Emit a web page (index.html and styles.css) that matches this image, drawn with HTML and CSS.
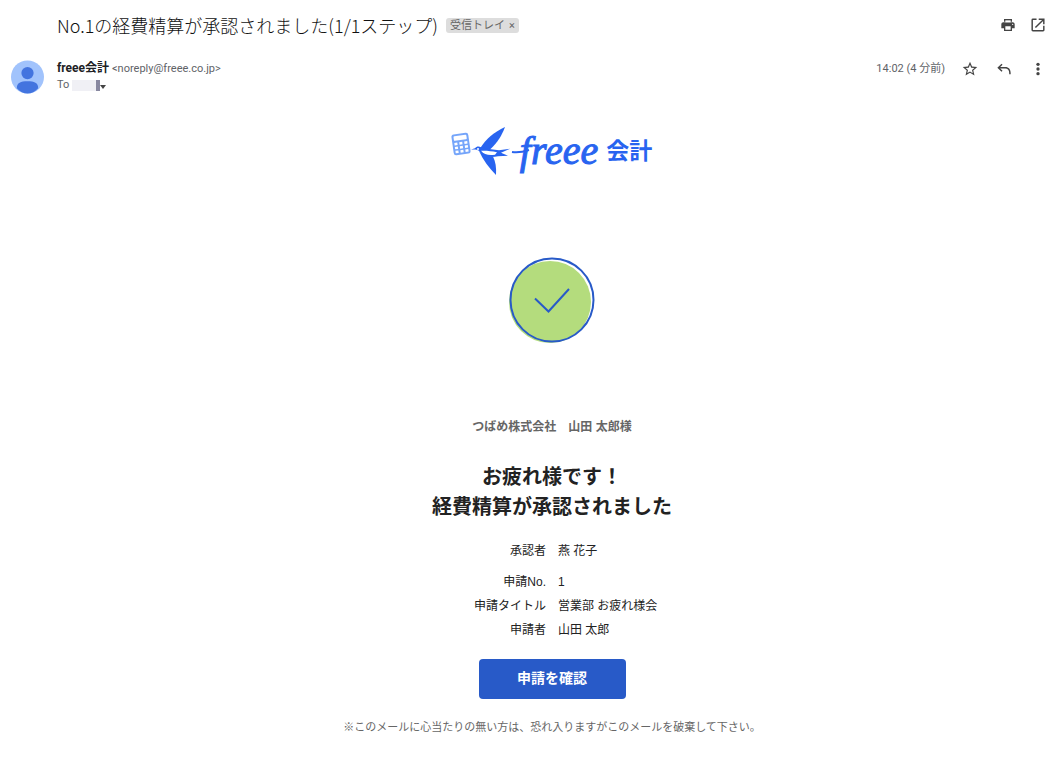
FILE: index.html
```html
<!DOCTYPE html>
<html lang="ja">
<head>
    <meta charset="UTF-8">
    <meta name="viewport" content="width=device-width, initial-scale=1.0">
    <title>No.1の経費精算が承認されました</title>
    <link rel="stylesheet" href="styles.css">
</head>
<body>
    <header class="subject-bar">
        <h1>No.1の経費精算が承認されました(1/1ステップ)</h1>
        <span class="label">受信トレイ<button class="label-remove" aria-label="ラベルを削除">×</button></span>
        <div class="actions">
            <button class="icon" aria-label="印刷">
                <svg viewBox="0 0 24 24"><path d="M19 8H5c-1.66 0-3 1.34-3 3v6h4v4h12v-4h4v-6c0-1.66-1.34-3-3-3zm-3 11H8v-5h8v5zm3-7c-.55 0-1-.45-1-1s.45-1 1-1 1 .45 1 1-.45 1-1 1zM18 3H6v4h12V3z"/><path class="paper" d="M8 5h8v3H8z"/></svg>
            </button>
            <button class="icon" aria-label="新しいウィンドウで開く">
                <svg viewBox="1 1 22 22"><path d="M19 19H5V5h5V3H5a2 2 0 0 0-2 2v14a2 2 0 0 0 2 2h14c1.1 0 2-.9 2-2v-6h-2v6zM13 3v2h4.590l-9.830 9.830 1.410 1.410L19 6.410V11h2V3h-8z"/></svg>
            </button>
        </div>
    </header>

    <section class="sender">
        <svg class="avatar" viewBox="0 0 34 34">
            <circle cx="17" cy="17" r="17" fill="#a1c3fc"/>
            <circle cx="17" cy="13" r="6.300" fill="#4374df"/>
            <path d="M6 28.500C6 23 10 21.500 17 21.500s11 1.500 11 7C25 32 21 34 17 34s-8-2-11-5.500z" fill="#4374df"/>
        </svg>
        <div class="from">
            <div><b>freee会計</b> <span class="address">&lt;noreply@freee.co.jp&gt;</span></div>
            <div class="to">To <span class="masked"></span><button class="details" aria-label="詳細を表示"></button></div>
        </div>
        <span class="time">14:02 (4 分前)</span>
        <div class="actions">
            <button class="icon" aria-label="スター">
                <svg viewBox="1 1 22 22"><path d="M22 9.240l-7.190-.62L12 2 9.190 8.630 2 9.240l5.460 4.730L5.820 21 12 17.270 18.180 21l-1.630-7.030L22 9.240zM12 15.400l-3.760 2.270 1-4.280-3.320-2.880 4.380-.38L12 6.100l1.710 4.040 4.380.38-3.320 2.880 1 4.280L12 15.400z"/></svg>
            </button>
            <button class="icon" aria-label="返信">
                <svg viewBox="0 0 24 24"><path d="M8.300 4l1.500 1.500L6.300 9H14c5 0 8 3.500 8 9v2h-2.200v-2c0-4.300-2.200-6.800-5.800-6.800H6.300l3.500 3.500-1.500 1.500L2 10.100z"/></svg>
            </button>
            <button class="icon" aria-label="その他">
                <svg viewBox="0 0 24 24"><circle cx="12" cy="5" r="2.500"/><circle cx="12" cy="12" r="2.500"/><circle cx="12" cy="19" r="2.500"/></svg>
            </button>
        </div>
    </section>

    <main class="mail">
        <div class="logo">
            <svg class="swallow" viewBox="2 1 68 54">
                <!-- calculator -->
                <g transform="rotate(-8 11 21)">
                    <rect x="2.500" y="10.500" width="17" height="21" rx="2.500" fill="#75a5fa"/>
                    <g fill="#fff">
                        <rect x="4.500" y="12.500" width="13" height="4.500" rx="1"/>
                        <rect x="4.500" y="19" width="3" height="2.500"/><rect x="9.500" y="19" width="3" height="2.500"/><rect x="14.500" y="19" width="3" height="2.500"/>
                        <rect x="4.500" y="23" width="3" height="2.500"/><rect x="9.500" y="23" width="3" height="2.500"/><rect x="14.500" y="23" width="3" height="2.500"/>
                        <rect x="4.500" y="27" width="3" height="2.500"/><rect x="9.500" y="27" width="3" height="2.500"/><rect x="14.500" y="27" width="3" height="2.500"/>
                    </g>
                </g>
                <!-- swallow -->
                <g fill="#2864f0">
                    <path d="M30 25.500C36 16 44 9 55 4c-3 8-7 15-15 22.500z"/>
                    <path d="M29 28c4 4 9 5 14 5.500 2.500 5 3.500 11 3 18.500C39 45 33 37 29 28z"/>
                    <path d="M21 26.500l4-1.200c1.500-2.200 4-2.300 6-1l10 2 8 1 11-1.500-9 4 7 3-10 .5c-8 1.500-15 .5-19-5.500-2-1.300-4-1.600-8-1.300z"/>
                </g>
                <path d="M31 27.800c5-.3 10 .2 16 1.400l-2 2.600c-6 .8-11 .2-14-4z" fill="#fff"/>
                <circle cx="28" cy="26" r="1" fill="#fff"/>
                <path d="M62 29c6 1 11 0 17-2" fill="none" stroke="#2864f0" stroke-width="2"/>
            </svg>
            <span class="wordmark">freee</span>
            <span class="product">会計</span>
        </div>

        <svg class="approved" viewBox="0 0 88 88">
            <circle cx="42" cy="45" r="41" fill="#b4dc7d"/>
            <circle cx="44" cy="43" r="41.500" fill="none" stroke="#285ac8" stroke-width="2"/>
            <path d="M27 41.500l13.500 13L61 32" fill="none" stroke="#285ac8" stroke-width="2"/>
        </svg>

        <p class="recipient">つばめ株式会社　山田 太郎様</p>
        <h2>お疲れ様です！<br>経費精算が承認されました</h2>

        <table class="request">
            <tbody class="approver">
                <tr><th scope="row">承認者</th><td>燕 花子</td></tr>
            </tbody>
            <tbody>
                <tr><th scope="row">申請No.</th><td>1</td></tr>
                <tr><th scope="row">申請タイトル</th><td>営業部 お疲れ様会</td></tr>
                <tr><th scope="row">申請者</th><td>山田 太郎</td></tr>
            </tbody>
        </table>

        <a class="confirm" href="#">申請を確認</a>
        <p class="note">※このメールに心当たりの無い方は、恐れ入りますがこのメールを破棄して下さい。</p>
    </main>
</body>
</html>
```

FILE: styles.css
```css
* {
    box-sizing: border-box;
}
body {
    margin: 0;
    background-color: #fff;
    color: #222;
    font-family: Roboto, "Noto Sans CJK JP", sans-serif;
    font-size: 12px;
}
h1, h2, p {
    margin: 0;
}
button {
    padding: 0;
    border: none;
    background: none;
    color: inherit;
    font: inherit;
    cursor: pointer;
}
.subject-bar {
    display: flex;
    align-items: center;
    height: 50px;
    padding: 0 9px 0 57px;
}
h1 {
    font-family: "Noto Sans CJK JP", sans-serif;
    font-size: 18px;
    font-weight: 300;
    line-height: 24px;
    color: #111;
}
.label {
    display: flex;
    align-items: center;
    gap: 4px;
    height: 15px;
    margin-left: 8px;
    padding: 0 4px;
    border-radius: 3px;
    background-color: #ddd;
    color: #666;
    font-size: 11px;
    line-height: 15px;
}
.actions {
    display: flex;
    gap: 16px;
}
.subject-bar .actions {
    margin-left: auto;
    gap: 12px;
}
.icon {
    width: 18px;
    height: 18px;
}
.icon svg {
    display: block;
    width: 16px;
    height: 16px;
    margin: 1px;
    fill: #444;
}
.icon .paper {
    fill: #fff;
}
.sender {
    display: flex;
    align-items: flex-start;
    padding: 10px 9px 0 11px;
}
.avatar {
    width: 33px;
    height: 34px;
    margin-right: 13px;
}
.from {
    line-height: 16px;
    color: #5f6368;
}
.from b {
    color: #202124;
}
.address {
    font-size: 11px;
}
.to {
    display: flex;
    align-items: center;
    font-size: 11px;
}
.masked {
    width: 28px;
    height: 11px;
    margin-left: 3px;
    border-right: 4px solid #8888a0;
    background-color: #f0f0f5;
}
.details {
    border: 3px solid transparent;
    border-top: 4px solid #444;
    border-bottom: none;
    margin-top: 4px;
}
.time {
    margin-left: auto;
    margin-right: 16px;
    font-size: 11px;
    line-height: 18px;
    color: #5f6368;
}
.mail {
    display: flex;
    flex-direction: column;
    align-items: center;
    padding: 30px 9px 20px 57px;
    font-family: "Liberation Sans", "Noto Sans CJK JP", sans-serif;
    text-align: center;
}
.logo {
    display: flex;
    align-items: center;
    height: 54px;
    color: #2864f0;
}
.swallow {
    width: 68px;
    height: 54px;
    overflow: visible;
}
.wordmark {
    font-family: "Liberation Serif", serif;
    font-size: 40px;
    font-style: italic;
    line-height: 48px;
    -webkit-text-stroke: 1px #2864f0;
}
.product {
    margin-left: 8px;
    font-size: 23px;
    font-weight: bold;
    line-height: 54px;
}
.approved {
    width: 88px;
    height: 88px;
    margin-top: 79px;
}
.recipient {
    margin-top: 73px;
    font-weight: bold;
    line-height: 18px;
    color: #666;
}
h2 {
    margin-top: 26px;
    font-size: 20px;
    line-height: 30px;
}
.request {
    width: 100%;
    margin-top: 17px;
    table-layout: fixed;
    border-collapse: collapse;
    line-height: 24px;
}
.request th {
    width: 50%;
    padding: 0 6px;
    font-weight: normal;
    text-align: right;
}
.request td {
    padding: 0 6px;
    text-align: left;
}
.approver th, .approver td {
    padding-bottom: 7px;
}
.confirm {
    width: 147px;
    margin-top: 17px;
    padding-bottom: 2px;
    border-radius: 4px;
    background-color: #285ac8;
    color: #fff;
    font-size: 14px;
    font-weight: bold;
    line-height: 38px;
    text-decoration: none;
}
.note {
    margin-top: 19px;
    font-size: 11px;
    line-height: 18px;
    color: #666;
}
```
